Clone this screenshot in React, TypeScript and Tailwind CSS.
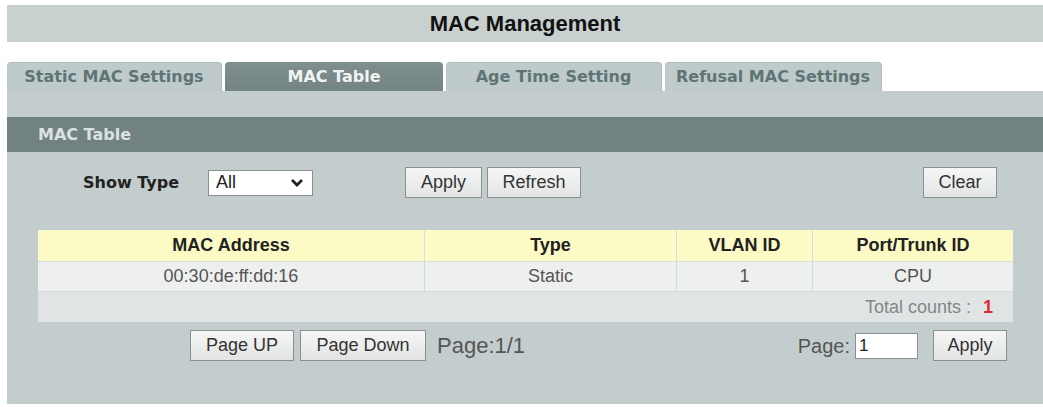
import React from 'react';

const tabs = [
  { label: 'Static MAC Settings', w: 'w-[215px]', active: false },
  { label: 'MAC Table', w: 'w-[218px]', active: true },
  { label: 'Age Time Setting', w: 'w-[216px]', active: false },
  { label: 'Refusal MAC Settings', w: 'w-[217px]', active: false },
];

const Btn = ({ children, className = '' }: { children: React.ReactNode; className?: string }) => (
  <div
    className={
      'flex items-center justify-center h-[31px] border border-[#8a9090] bg-gradient-to-b from-[#f6f6f6] to-[#e2e4e4] text-[18px] text-[#333] ' +
      className
    }
  >
    {children}
  </div>
);

export default function App() {
  return (
    <div className="w-[1043px] h-[407px] bg-white pl-[7px] pt-[5px] font-['Liberation_Sans',Arial,sans-serif] overflow-hidden">
      {/* title */}
      <div className="h-[37px] bg-[#c8d0d0] flex items-center justify-center">
        <span className="text-[22px] font-bold text-[#111]">MAC Management</span>
      </div>

      {/* tabs */}
      <div className="mt-[20px] h-[29px] flex gap-[3px] font-['DejaVu_Sans',sans-serif] font-bold text-[16px]">
        {tabs.map((t) => (
          <div
            key={t.label}
            className={
              'flex items-center justify-center rounded-t-[4px] ' +
              t.w +
              (t.active
                ? ' bg-gradient-to-b from-[#7f8e8e] to-[#748383] text-[#f2f4f4]'
                : ' bg-[#bfcaca] text-[#5f7575] border-t border-r border-[#b2bcbc]')
            }
          >
            {t.label}
          </div>
        ))}
      </div>

      {/* panel */}
      <div className="h-[313px] bg-[#c3cdcd] pt-[26px]">
        <div className="h-[35px] bg-[#718281] flex items-center pl-[31px] font-['DejaVu_Sans',sans-serif] font-bold text-[16px] text-[#dce2e2]">
          MAC Table
        </div>

        {/* controls */}
        <div className="mt-[15px] h-[31px] flex items-center">
          <span className="ml-[76px] w-[125px] font-['DejaVu_Sans',sans-serif] font-bold text-[16px] text-[#222]">
            Show Type
          </span>
          <div className="w-[105px] h-[26px] bg-white border border-[#8a9090] flex items-center justify-between pl-[7px] pr-[8px] text-[18px] text-[#222]">
            <span>All</span>
            <svg width="14" height="10" viewBox="0 0 14 10">
              <path d="M2 2 L7 7 L12 2" fill="none" stroke="#222" strokeWidth="2.8" />
            </svg>
          </div>
          <Btn className="ml-[92px] w-[77px]">Apply</Btn>
          <Btn className="ml-[5px] w-[94px]">Refresh</Btn>
          <Btn className="ml-auto mr-[46px] w-[74px]">Clear</Btn>
        </div>

        {/* table */}
        <div className="mt-[32px] ml-[31px] w-[975px] text-[18px]">
          <div className="flex h-[32px] bg-[#fcfbc6] font-bold text-[#222] border-b border-[#d9dcd8]">
            <div className="w-[387px] flex items-center justify-center border-r border-[#d9dcd8]">MAC Address</div>
            <div className="w-[252px] flex items-center justify-center border-r border-[#d9dcd8]">Type</div>
            <div className="w-[136px] flex items-center justify-center border-r border-[#d9dcd8]">VLAN ID</div>
            <div className="flex-1 flex items-center justify-center">Port/Trunk ID</div>
          </div>
          <div className="flex h-[30px] bg-[#eeefef] text-[#555] border-b border-[#d6dada]">
            <div className="w-[387px] flex items-center justify-center border-r border-[#d6dada]">00:30:de:ff:dd:16</div>
            <div className="w-[252px] flex items-center justify-center border-r border-[#d6dada]">Static</div>
            <div className="w-[136px] flex items-center justify-center border-r border-[#d6dada]">1</div>
            <div className="flex-1 flex items-center justify-center">CPU</div>
          </div>
          <div className="h-[30px] bg-[#e0e4e4] flex items-center justify-end pr-[20px] text-[#808888]">
            Total counts :<span className="ml-[12px] font-bold text-[#e0283c]">1</span>
          </div>
        </div>

        {/* pagination */}
        <div className="mt-[8px] h-[31px] flex items-center">
          <Btn className="ml-[183px] w-[104px]">Page UP</Btn>
          <Btn className="ml-[6px] w-[126px]">Page Down</Btn>
          <span className="ml-[11px] text-[22px] text-[#555]">Page:1/1</span>
          <span className="ml-auto text-[20px] text-[#555]">Page:</span>
          <div className="ml-[5px] w-[63px] h-[26px] bg-white border border-[#8a9090] flex items-center pl-[3px] text-[17px] text-[#222]">
            1
          </div>
          <Btn className="ml-[15px] mr-[36px] w-[74px]">Apply</Btn>
        </div>
      </div>
    </div>
  );
}
